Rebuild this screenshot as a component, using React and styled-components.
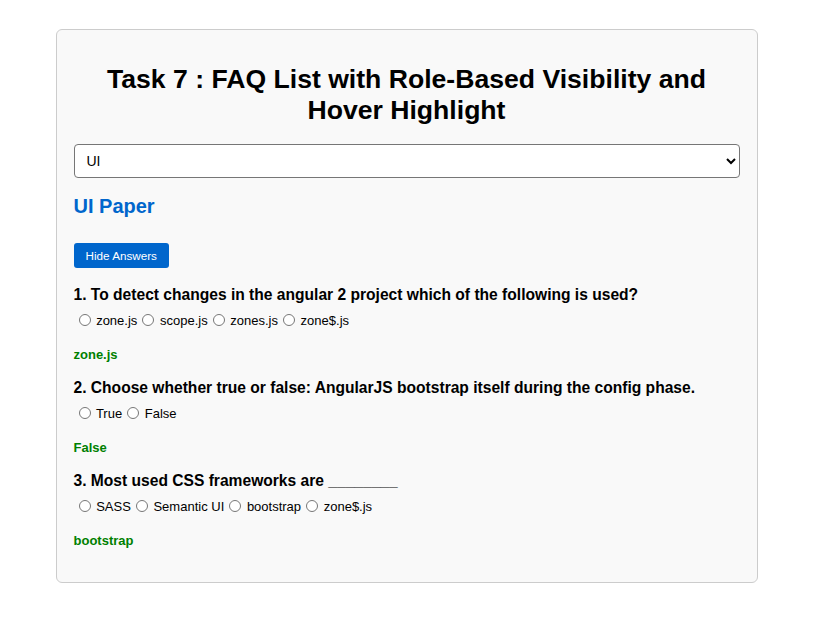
import React, { useState } from 'react';
import styled, { createGlobalStyle } from 'styled-components';

const GlobalStyle = createGlobalStyle`
    body {
        margin: 0;
        font-family: Arial, "Liberation Sans", sans-serif;
        background: #fff;
    }
`;

const Page = styled.div`
    width: 813px;
    padding-top: 29px;
`;

const Card = styled.div`
    width: 666px;
    margin: 0 auto;
    padding: 18px 17px 34px;
    background-color: #f9f9f9;
    border: 1px solid #ccc;
    border-radius: 6px;
`;

const Title = styled.h2`
    font-size: 26.6px;
    text-align: center;
    margin: 16px 0 18px;
    line-height: 31px;
`;

const RoleSelect = styled.select`
    width: 100%;
    height: 34px;
    padding: 0 8px;
    font-size: 14px;
    font-family: inherit;
    border: 1px solid #767676;
    border-radius: 4px;
    background: #fff;
    color: #000;
`;

const PaperTitle = styled.h3`
    color: #0066cc;
    font-size: 20px;
    margin: 17px 0 25px;
`;

const ToggleButton = styled.button`
    display: block;
    height: 25px;
    padding: 0 12px;
    font-size: 11.7px;
    font-family: inherit;
    color: #fff;
    background-color: #0066cc;
    border: none;
    border-radius: 3px;
    cursor: pointer;
`;

const Question = styled.div`
    margin-top: 18px;
    & + & {
        margin-top: 17px;
    }
`;

const QuestionText = styled.p`
    font-size: 15.6px;
    font-weight: bold;
    margin: 0 0 7px;
`;

const Options = styled.div`
    font-size: 13px;
    line-height: 18px;
`;

const Radio = styled.input.attrs({ type: 'radio' })`
    width: 12px;
    height: 12px;
    margin: 3px 2px 0 5px;
    vertical-align: -1px;
`;

const Answer = styled.p`
    color: green;
    font-weight: bold;
    font-size: 13px;
    margin: 17px 0 0;
`;

const faqs = [
    {
        q: '1. To detect changes in the angular 2 project which of the following is used?',
        options: ['zone.js', 'scope.js', 'zones.js', 'zone$.js'],
        answer: 'zone.js',
    },
    {
        q: '2. Choose whether true or false: AngularJS bootstrap itself during the config phase.',
        options: ['True', 'False'],
        answer: 'False',
    },
    {
        q: '3. Most used CSS frameworks are ________',
        options: ['SASS', 'Semantic UI', 'bootstrap', 'zone$.js'],
        answer: 'bootstrap',
    },
];

export default function App() {
    const [role, setRole] = useState('UI');
    const [show, setShow] = useState(true);
    return (
        <Page>
            <GlobalStyle />
            <Card>
                <Title>Task 7 : FAQ List with Role-Based Visibility and Hover Highlight</Title>
                <RoleSelect value={role} onChange={(e) => setRole(e.target.value)}>
                    <option value="UI">UI</option>
                    <option value="Java">Java</option>
                </RoleSelect>
                <PaperTitle>{role} Paper</PaperTitle>
                <ToggleButton onClick={() => setShow(!show)}>
                    {show ? 'Hide Answers' : 'Show Answers'}
                </ToggleButton>
                {faqs.map((f, i) => (
                    <Question key={i}>
                        <QuestionText>{f.q}</QuestionText>
                        <Options>
                            {f.options.map((o) => (
                                <label key={o}>
                                    <Radio name={'q' + i} /> {o}
                                </label>
                            ))}
                        </Options>
                        {show && <Answer>{f.answer}</Answer>}
                    </Question>
                ))}
            </Card>
        </Page>
    );
}
